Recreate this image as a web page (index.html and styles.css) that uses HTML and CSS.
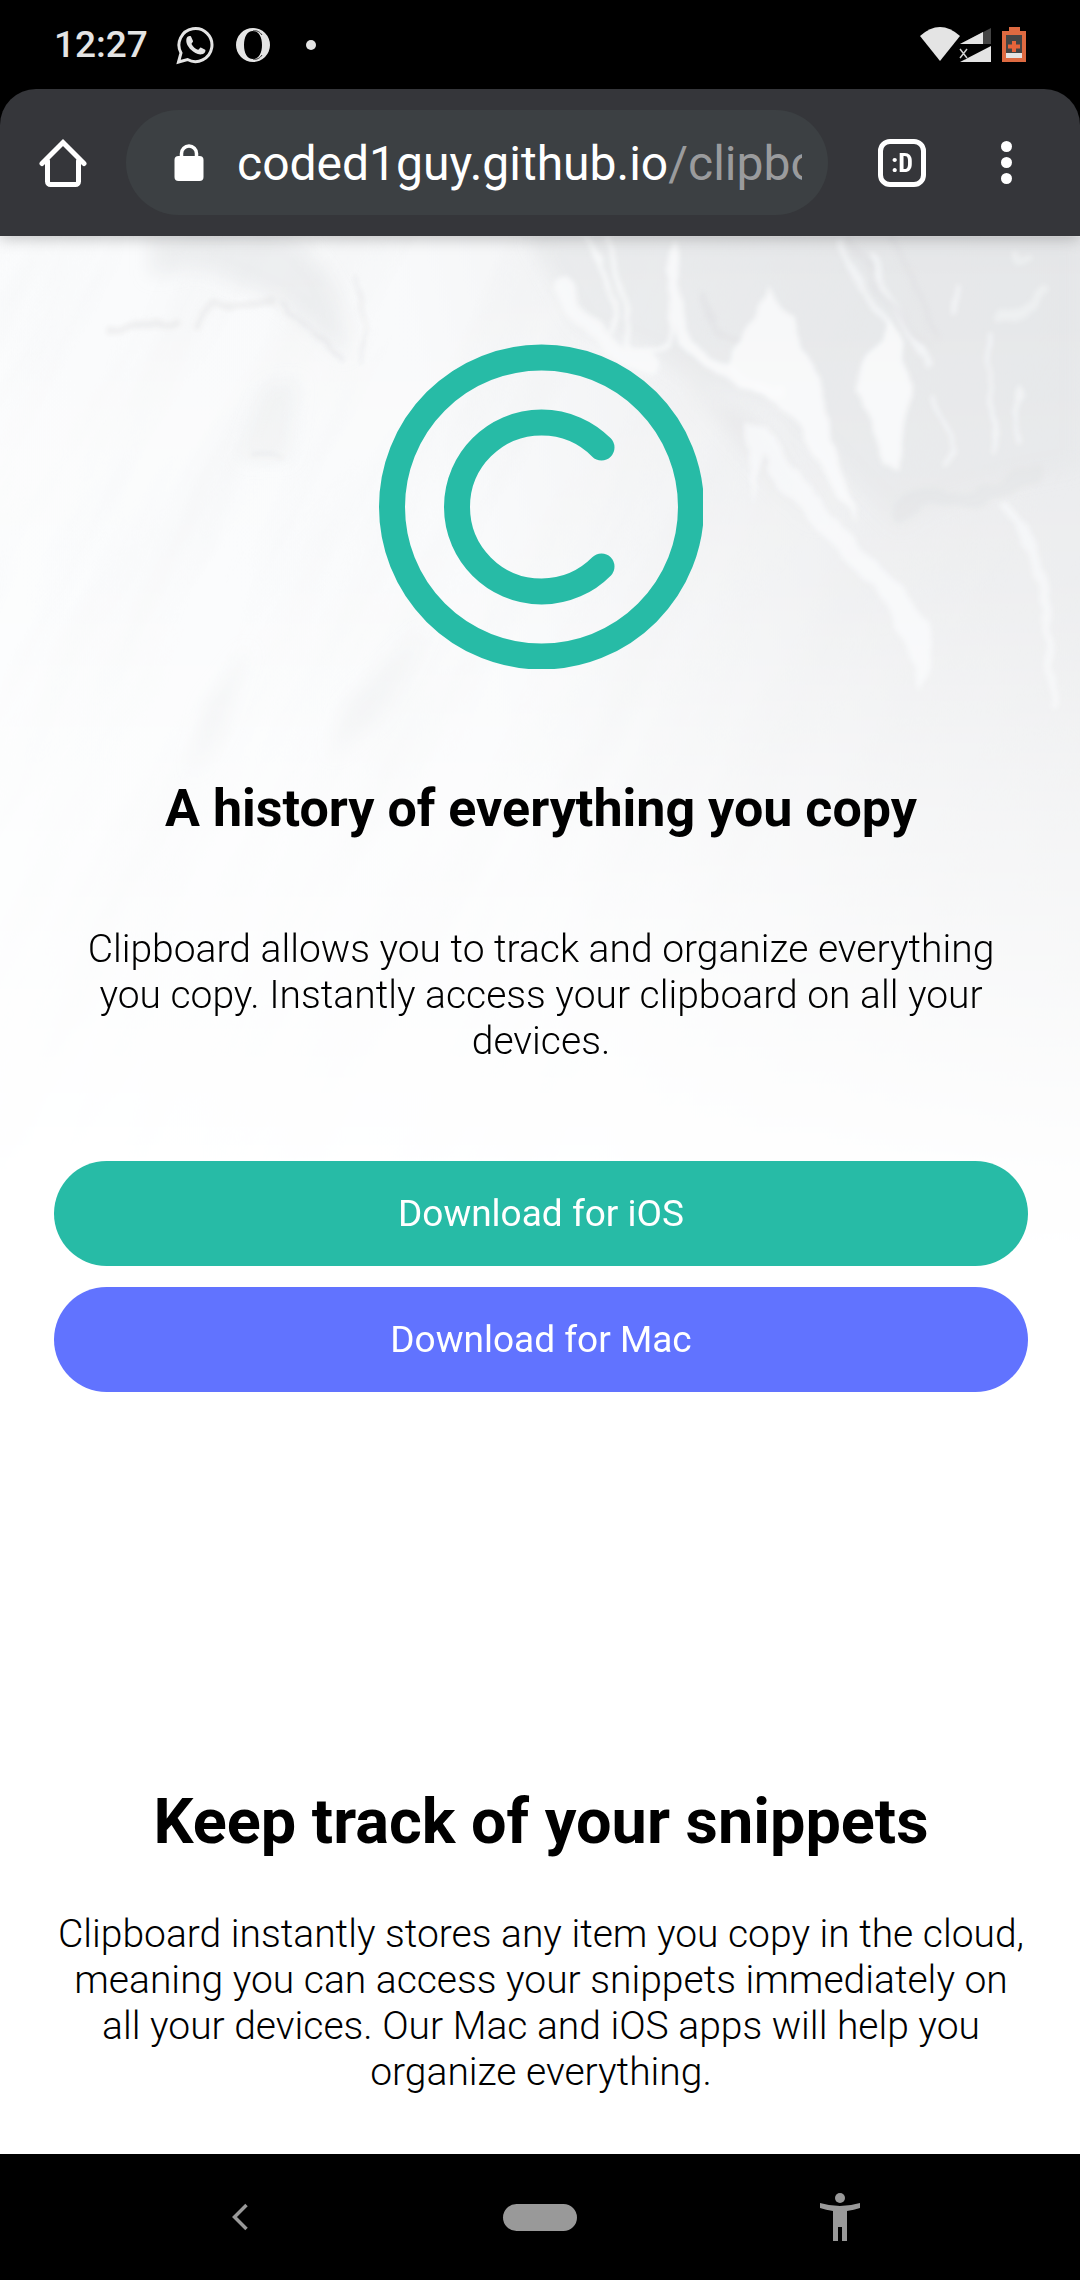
FILE: index.html
```html
<!DOCTYPE html>
<html lang="en">
<head>
<meta charset="utf-8">
<meta name="viewport" content="width=device-width, initial-scale=1">
<title>Clipboard</title>
<link rel="stylesheet" href="styles.css">
</head>
<body>
<div class="status-bar">
  <time class="clock">12:27</time>
  <svg class="notify-icon" width="38" height="40" viewBox="0 0 38 40" aria-hidden="true">
    <path d="M2.500 37 L5 28 A16.500 16.500 0 1 1 11.500 34.500 Z" fill="none" stroke="#e4e4e4" stroke-width="3"/>
    <path d="M10.500 13.500c1-2.500 3.500-3 4.500-2l2 4.500c.4 1-1.500 2-1.500 3 1.500 3 4 5 6.500 5.800 1 0 1.800-2.400 2.800-2.300l4.400 2.200c.8 1-.4 4-3.200 4.600-4 .7-8-1.500-11-4.500s-5.500-7-4.500-11.300z" fill="#e4e4e4"/>
  </svg>
  <svg class="notify-icon opera" width="34" height="34" viewBox="0 0 34 34" aria-hidden="true">
    <path d="M17 0a17 17 0 1 0 0 34 17 17 0 0 0 0-34zm0 3c6 0 9 6 9 14s-3 14-9 14-9-6-9-14 3-14 9-14z" fill="#e4e4e4" fill-rule="evenodd"/>
    <path d="M17 3c4-1 7 1 9 4M17 31c4 1 7-1 9-4" fill="none" stroke="#333"/>
  </svg>
  <span class="notify-dot"></span>
  <svg class="signal-icons" width="108" height="36" viewBox="0 0 108 36" aria-label="Wi-Fi, mobile signal and battery">
    <path d="M0 9Q20-9 40 9L20 34z" fill="#e4e4e4"/>
    <path d="M40 17 71 1v16z" fill="#444"/>
    <path d="M40 17 63 5v12z" fill="#e4e4e4"/>
    <path d="M40 35 71 19v16z" fill="#e4e4e4"/>
    <path d="M40 22l7 9m0-9-7 9" stroke="#000" stroke-width="5"/>
    <path d="M40 22l7 9m0-9-7 9" stroke="#d0d0d0" stroke-width="1.500"/>
    <path d="M82 4h7V0h11v4h6v31H82z" fill="#de6a41"/>
    <path d="M86 8h16v18H86z" fill="#444"/>
    <path d="M86 26h16v5H86z" fill="#e4e4e4"/>
    <path d="M94 14v11M88 19.500h12" stroke="#e8643a" stroke-width="4"/>
  </svg>
</div>
<header class="browser-bar">
  <button class="bar-button" aria-label="Home">
    <svg width="48" height="50" viewBox="0 0 48 50"><path d="M3 25.500 24 4.500l21 21M8.500 23v20.500a3 3 0 0 0 3 3h25a3 3 0 0 0 3-3V23" fill="none" stroke="#fff" stroke-width="5" stroke-linecap="round"/></svg>
  </button>
  <a class="address" href="#">
    <svg class="lock" width="30" height="38" viewBox="0 0 30 38" aria-hidden="true"><path d="M7.500 15V9.500a7.500 7.500 0 0 1 15 0V15" fill="none" stroke="#fff" stroke-width="3.500"/><rect x=".5" y="12" width="29" height="25" rx="4" fill="#fff"/></svg>
    <span class="url">coded1guy.github.io<span class="path">/clipboard</span></span>
  </a>
  <button class="tabs" aria-label="Tabs">:D</button>
  <button class="menu" aria-label="Menu"><span></span><span></span><span></span></button>
</header>
<main class="page">
  <section class="hero">
    <svg class="marble" viewBox="0 0 1080 1157" preserveAspectRatio="none" aria-hidden="true">
      <defs>
        <linearGradient id="side" x1="0" y1=".25" x2="1" y2="0"><stop offset="0" stop-color="#e6e7e9" stop-opacity="0"/><stop offset=".4" stop-color="#e6e7e9" stop-opacity=".1"/><stop offset=".75" stop-color="#e6e7e9" stop-opacity=".7"/><stop offset="1" stop-color="#e6e7e9" stop-opacity=".9"/></linearGradient>
        <linearGradient id="fade" x2="0" y2="1"><stop offset="0" stop-color="#fff"/><stop offset=".3" stop-color="#fff" stop-opacity=".8"/><stop offset=".55" stop-color="#fff" stop-opacity=".45"/><stop offset=".8" stop-color="#fff" stop-opacity=".08"/><stop offset=".9" stop-color="#fff" stop-opacity="0"/></linearGradient>
        <mask id="down"><rect width="1080" height="1157" fill="url(#fade)"/></mask>
        <filter id="soft" x="-20%" y="-20%" width="140%" height="140%"><feTurbulence type="fractalNoise" baseFrequency=".025" numOctaves="3" seed="4"/><feDisplacementMap in="SourceGraphic" scale="18" xChannelSelector="R" yChannelSelector="G"/><feGaussianBlur stdDeviation="2.500"/></filter>
        <filter id="haze" x="-20%" y="-20%" width="140%" height="140%"><feGaussianBlur stdDeviation="9"/></filter>
        <filter id="grain" x="0" y="0" width="100%" height="100%"><feTurbulence type="fractalNoise" baseFrequency=".018 .003" numOctaves="4" seed="12"/><feColorMatrix values="0 0 0 0 .8  0 0 0 0 .81  0 0 0 0 .82  1.600 0 0 0 -.62"/></filter>
      </defs>
      <g mask="url(#down)">
        <rect width="1080" height="1157" fill="#fbfcfd"/>
        <rect width="1080" height="1157" fill="url(#side)"/>
        <g transform="rotate(28 540 500)"><rect x="-300" y="-300" width="1700" height="1700" filter="url(#grain)" opacity=".28"/></g>
        <g filter="url(#haze)" fill="#e2e3e5">
          <path d="M530 0H1080V230Q950 250 900 290L850 240 780 165 700 150 660 120 580 90z" opacity=".5"/>
          <path d="M690 150 750 180 820 290 760 230z" opacity=".6"/>
          <path d="M150 0H290Q350 50 345 120L280 65 200 30 150 40z" opacity=".5"/>
          <path d="M430 390 380 480 330 520 345 470z" opacity=".4"/>
          <path d="M250 410 220 500 190 540 205 470z" opacity=".4"/>
          <path d="M265 150 300 145 290 225 240 224z" opacity=".3"/>
        </g>
        <g filter="url(#soft)">
          <g fill="#fafbfc" opacity=".85">
            <path d="M767 50Q775 70 793 80Q800 120 820 144Q835 220 858 290Q820 240 800 190Q780 160 727 140L733 120Q755 90 767 50z"/>
            <path d="M890 84 903 104 912 154 903 234 880 228 868 180 853 150 868 118z"/>
            <path d="M745 188Q775 185 790 225L860 310Q900 350 927 384Q935 420 920 460Q915 410 880 360L800 275 760 220 752 270z" opacity=".8"/>
          </g>
          <g fill="none" stroke="#fafbfc" stroke-linecap="round" opacity=".85">
            <path d="M587 0Q614 40 612 94M607 0Q624 50 628 104Q647 130 670 107L673 10" stroke-width="5"/>
            <path d="M673 20Q670 90 700 120T780 154" stroke-width="12"/>
            <path d="M560 50Q600 110 650 130" stroke-width="16"/>
            <path d="M840 7Q860 50 890 90M870 20Q890 70 930 130" stroke-width="6" opacity=".7"/>
            <path d="M990 94Q978 130 990 160T993 220M955 50V75M1020 150V210M935 160 955 215 945 230" stroke-width="5" opacity=".7"/>
            <path d="M1000 270Q1030 290 1040 340T1055 470" stroke-width="8" opacity=".7"/>
            <path d="M1000 80Q1030 80 1045 50M1010 20Q1020 35 1028 25" stroke-width="8" opacity=".5"/>
          </g>
          <g fill="none" stroke="#dfe0e2" stroke-linecap="round">
            <path d="M900 275 925 262 970 262 1035 240" stroke-width="16" opacity=".55"/>
            <path d="M280 68Q310 100 340 125M355 40Q370 80 360 130M250 224H285" stroke-width="3" opacity=".6"/>
            <path d="M108 92 165 86 172 84M195 90 215 68 270 66" stroke-width="7" opacity=".5"/>
            <path d="M700 60Q720 100 740 105M850 0Q880 60 925 110M890 0 940 100" stroke-width="5" opacity=".6"/>
          </g>
        </g>
      </g>
    </svg>
    <svg class="logo" width="324" height="325" viewBox="0 0 324 325" role="img" aria-label="Clipboard logo">
      <g fill="none" stroke="#27bba6" stroke-width="26"><circle cx="162.500" cy="163" r="149.500"/><path d="M222.500 103.500A84.500 84.500 0 1 0 222.500 222.500" stroke-linecap="round"/></g>
    </svg>
    <h1>A history of everything you copy</h1>
    <p class="lead">Clipboard allows you to track and organize everything you copy. Instantly access your clipboard on all your devices.</p>
    <div class="downloads">
      <button class="download ios">Download for iOS</button>
      <button class="download mac">Download for Mac</button>
    </div>
  </section>
  <section class="snippets">
    <h2>Keep track of your snippets</h2>
    <p>Clipboard instantly stores any item you copy in the cloud, meaning you can access your snippets immediately on all your devices. Our Mac and iOS apps will help you organize everything.</p>
  </section>
</main>
<nav class="system-nav" aria-label="System">
  <button aria-label="Back"><svg width="18" height="28" viewBox="0 0 18 28"><path d="M15.500 2 3.500 14l12 12" fill="none" stroke="#999" stroke-width="3.500"/></svg></button>
  <button aria-label="Home screen"><span class="home-pill"></span></button>
  <button aria-label="Accessibility"><svg width="42" height="48" viewBox="0 0 42 48"><g fill="#999"><circle cx="21" cy="5" r="5"/><path d="M1 10Q21 16 41 10V15Q35 17 28 18V48H23V34H19V48H14V18Q7 17 1 15z"/></g></svg></button>
</nav>
</body>
</html>
```
FILE: styles.css
```css
* { box-sizing: border-box; }
body { margin: 0; min-height: 100vh; display: flex; flex-direction: column; background: #000; color: #000; font-family: Roboto, sans-serif; }
button { border: 0; padding: 0; background: none; color: inherit; font: inherit; }
svg { display: block; flex: none; }
h1, h2, p { margin: 0; }

.status-bar { height: 89px; padding: 0 52px 0 54px; display: flex; align-items: center; color: #e4e4e4; }
.clock { font-size: 37px; font-weight: 500; }
.notify-icon { margin-left: 28px; }
.opera { margin-left: 22px; }
.notify-dot { width: 10px; height: 10px; margin-left: 36px; border-radius: 50%; background: #e4e4e4; }
.signal-icons { margin-left: auto; }

.browser-bar { position: relative; z-index: 1; height: 147px; padding: 0 62px 0 39px; display: flex; align-items: center; border-radius: 36px 36px 0 0; background: #35363a; color: #fff; box-shadow: 0 2px 16px rgba(0, 0, 0, .25); }
.address { flex: 1; min-width: 0; height: 105px; margin: 0 50px 0 39px; padding: 0 26px 0 48px; display: flex; align-items: center; gap: 33px; border-radius: 53px; background: #3c4043; color: #fff; text-decoration: none; }
.url { flex: 1; padding-top: 3px; overflow: hidden; white-space: nowrap; font-size: 48px; line-height: 64px; }
.path { color: #9a9b9d; }
.tabs { width: 48px; height: 48px; border: 5px solid #fff; border-radius: 12px; font-size: 26px; line-height: 36px; font-weight: 700; font-family: "Roboto Condensed", Roboto, sans-serif; }
.menu { width: 24px; margin-left: 68px; display: flex; flex-direction: column; align-items: center; gap: 5px; }
.menu span { width: 11px; height: 11px; border-radius: 50%; background: #fff; }

.page { flex: 1; background: #fff; text-align: center; }
.hero { position: relative; padding: 108px 52px 0 54px; }
.marble { position: absolute; inset: 0; width: 100%; height: 100%; }
.logo { position: relative; margin: 0 auto; }
h1 { position: relative; margin-top: 109px; font-size: 52px; line-height: 62px; font-weight: 700; }
p { font-size: 39px; line-height: 46px; font-weight: 300; }
.lead { position: relative; margin-top: 86px; padding: 0 24px; }
.downloads { position: relative; margin-top: 97px; display: flex; flex-direction: column; gap: 21px; }
.download { height: 105px; border-radius: 53px; color: #fff; font-size: 37px; }
.ios { background: #27bba6; }
.mac { background: #6173ff; }
.snippets { padding: 393px 52px 50px 54px; }
h2 { font-size: 63px; line-height: 74px; font-weight: 700; }
.snippets p { margin-top: 52px; }

.system-nav { height: 126px; padding: 0 120px; display: grid; grid-template-columns: 1fr 360px 1fr; align-items: center; justify-items: center; }
.home-pill { display: block; width: 74px; height: 27px; border-radius: 14px; background: #999; }
```
